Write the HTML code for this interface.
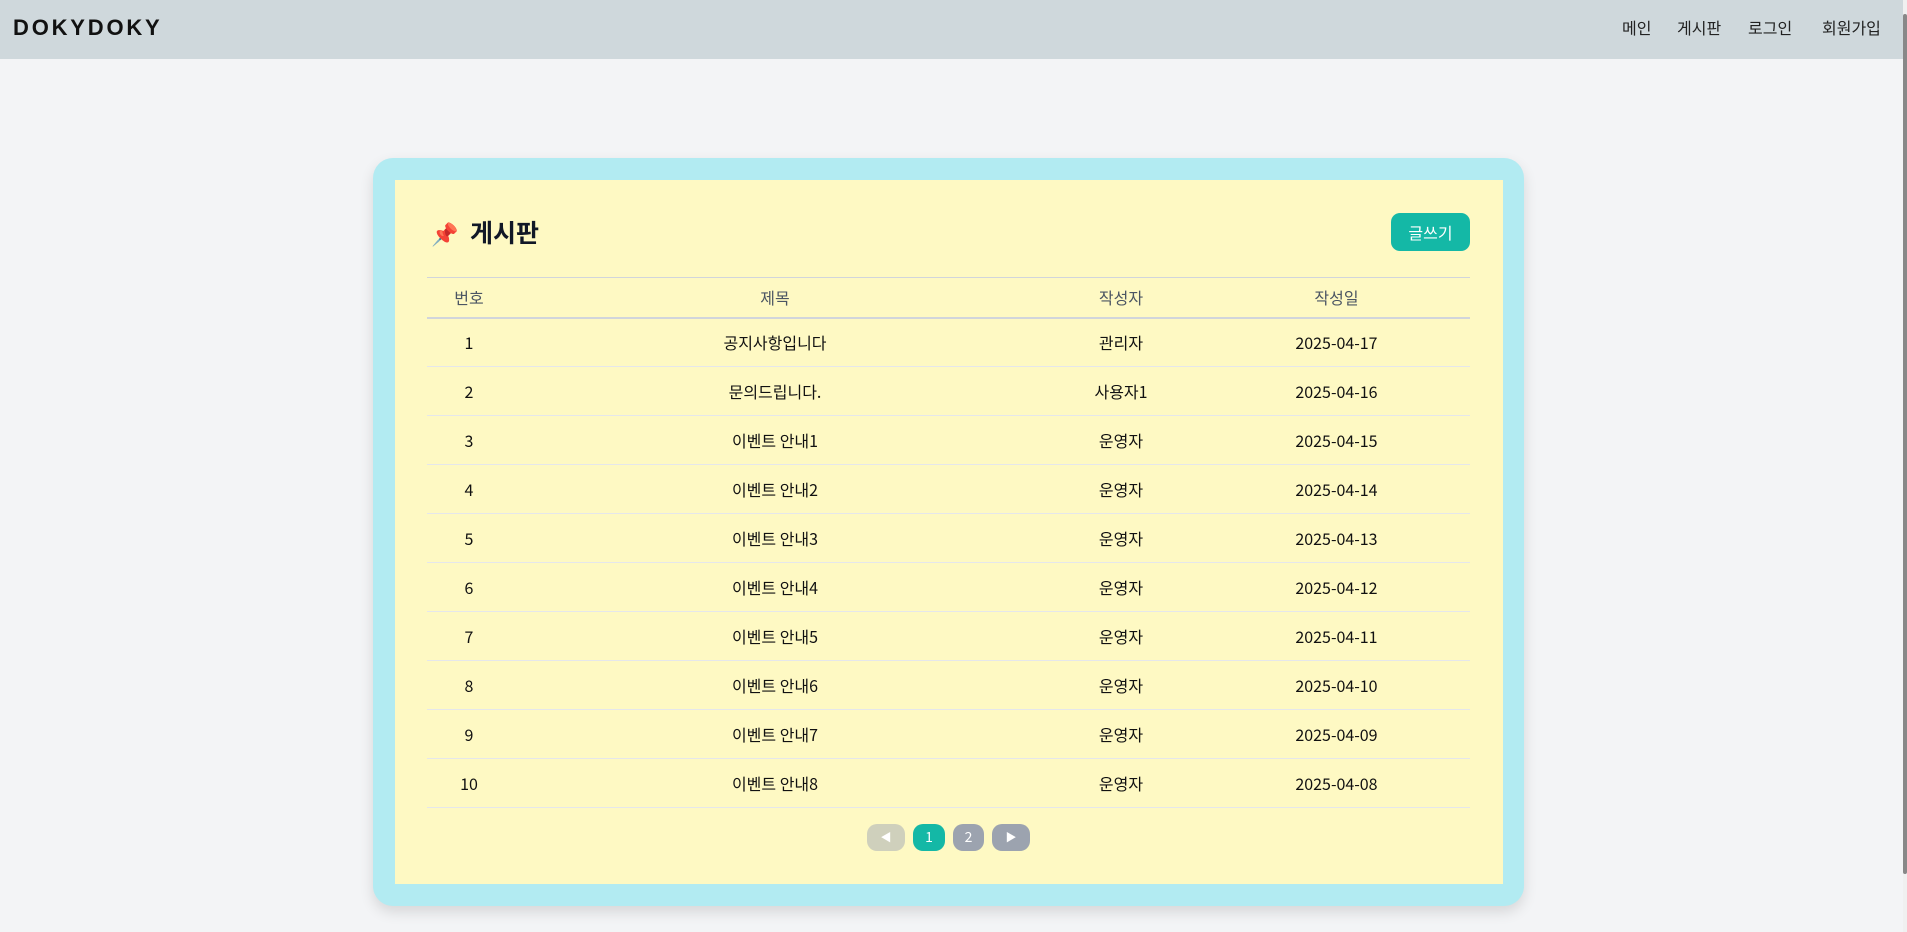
<!DOCTYPE html>
<html><head><meta charset="utf-8"><style>
*{margin:0;padding:0;box-sizing:border-box}
body{width:1907px;height:932px;background:#f3f4f6;font-family:"Noto Sans CJK KR",sans-serif;position:relative;overflow:hidden;color:#111}
.hdr{position:absolute;left:0;top:0;width:1903px;height:59px;background:#cfd8dc}
.logo{position:absolute;left:13px;top:15px;font-family:"Liberation Sans",sans-serif;font-size:22px;font-weight:bold;letter-spacing:2.8px;color:#111}
.nav a{position:absolute;top:15px;font-size:16px;color:#222;text-decoration:none;line-height:24px}
.sb{position:absolute;left:1903px;top:0;width:4px;height:932px;background:#f0f0f0}
.sb i{position:absolute;left:0;top:14px;width:4px;height:860px;background:#888;border-radius:2px}
.card{position:absolute;left:373px;top:158px;width:1151px;height:748px;background:#b2ebf2;border-radius:20px;box-shadow:0 6px 14px rgba(0,0,0,.12)}
.inner{position:absolute;left:22px;top:22px;width:1108px;height:704px;background:#fef9c3}
.pin{position:absolute;left:36px;top:38px;font-size:22px;line-height:30px}
.title{position:absolute;left:75px;top:34px;font-size:25px;font-weight:bold;color:#111827;line-height:36px}
.btn{position:absolute;left:996px;top:33px;width:79px;height:38px;background:#14b8a6;color:#fff;border-radius:9px;font-size:16px;text-align:center;line-height:38px}
table{position:absolute;left:32px;top:97px;width:1043px;border-collapse:collapse;font-size:16px;line-height:20px}
th{font-weight:normal;color:#4b5563;height:40px;border-top:1px solid #d1d5db;border-bottom:2px solid #d1d5db}
td{height:49px;text-align:center;border-bottom:1px solid #e5e7eb;color:#111}
.pg{position:absolute;top:644px;height:27px;border-radius:10px;color:#fff;font-size:14px;text-align:center;line-height:27px}
</style></head><body>
<div class="hdr"><div class="logo">DOKYDOKY</div>
<div class="nav"><a style="left:1622px">메인</a><a style="left:1677px">게시판</a><a style="left:1748px">로그인</a><a style="left:1822px">회원가입</a></div></div>
<div class="sb"><i></i></div>
<div class="card"><div class="inner">
<div class="pin">📌</div><div class="title">게시판</div>
<div class="btn">글쓰기</div>
<table>
<colgroup><col style="width:84px"><col style="width:528px"><col style="width:164px"><col style="width:267px"></colgroup>
<tr><th>번호</th><th>제목</th><th>작성자</th><th>작성일</th></tr>
<tr><td>1</td><td>공지사항입니다</td><td>관리자</td><td>2025-04-17</td></tr>
<tr><td>2</td><td>문의드립니다.</td><td>사용자1</td><td>2025-04-16</td></tr>
<tr><td>3</td><td>이벤트 안내1</td><td>운영자</td><td>2025-04-15</td></tr>
<tr><td>4</td><td>이벤트 안내2</td><td>운영자</td><td>2025-04-14</td></tr>
<tr><td>5</td><td>이벤트 안내3</td><td>운영자</td><td>2025-04-13</td></tr>
<tr><td>6</td><td>이벤트 안내4</td><td>운영자</td><td>2025-04-12</td></tr>
<tr><td>7</td><td>이벤트 안내5</td><td>운영자</td><td>2025-04-11</td></tr>
<tr><td>8</td><td>이벤트 안내6</td><td>운영자</td><td>2025-04-10</td></tr>
<tr><td>9</td><td>이벤트 안내7</td><td>운영자</td><td>2025-04-09</td></tr>
<tr><td>10</td><td>이벤트 안내8</td><td>운영자</td><td>2025-04-08</td></tr>
</table>
<div class="pg" style="left:472px;width:38px;background:#cfd0bc;font-size:11px">◀</div>
<div class="pg" style="left:518px;width:32px;background:#14b8a6">1</div>
<div class="pg" style="left:558px;width:31px;background:#9ca3af">2</div>
<div class="pg" style="left:597px;width:38px;background:#9ca3af;font-size:11px">▶</div>
</div></div>
</body></html>
